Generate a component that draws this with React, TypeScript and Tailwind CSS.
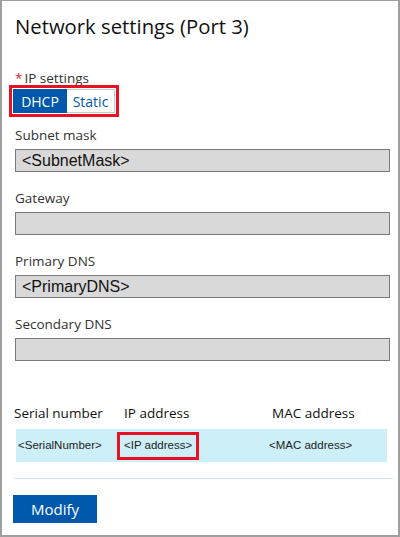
import React from "react";

const ui = { fontFamily: '"Open Sans", "Noto Sans", sans-serif' };
const arial = { fontFamily: '"Liberation Sans", Arial, sans-serif' };

function Field({ label, value }: { label: string; value?: string }) {
  return (
    <div className="flex flex-col">
      <div className="text-[13.5px] leading-[20px] text-[#333]" style={ui}>
        {label}
      </div>
      <div
        className="mt-[4px] h-[23px] w-[375px] bg-[#d9d9d9] border border-[#7a7a7a] flex items-center pl-[6px] text-[16px] text-[#111]"
        style={arial}
      >
        {value}
      </div>
    </div>
  );
}

export default function App() {
  return (
    <div className="w-[400px] h-[537px] bg-white border-[#a0a0a0] border-t border-l-2 border-r-2 border-b-2 flex flex-col">
      <div className="pl-[13px] pt-[10px] text-[20.3px] leading-[30px] text-[#111]" style={ui}>
        Network settings (Port 3)
      </div>
      <div className="pl-[13px] pt-[28px] flex flex-col">
        <div className="text-[13.5px] leading-[18px] text-[#333]" style={ui}>
          <span className="text-[#e0202a] mr-[2px]">*</span>IP settings
        </div>
        <div className="-ml-[6px] mt-[-2px] inline-flex self-start border-[3px] border-[#e81123] p-[1px]">
          <div className="flex h-[24px]">
            <div className="bg-[#0058ad] text-white text-[14px] w-[54px] flex items-center justify-center" style={ui}>
              DHCP
            </div>
            <div className="border border-[#c8c8c8] border-l-0 text-[#0058ad] text-[14px] w-[48px] flex items-center justify-center bg-white" style={ui}>
              Static
            </div>
          </div>
        </div>
        <div className="mt-[8px] flex flex-col gap-[16px]">
          <Field label="Subnet mask" value="<SubnetMask>" />
          <Field label="Gateway" />
          <Field label="Primary DNS" value="<PrimaryDNS>" />
          <Field label="Secondary DNS" />
        </div>
      </div>
      <div className="mt-[42px] pl-[12px] flex text-[13.5px] leading-[20px] text-[#111]" style={ui}>
        <div className="w-[110px]">Serial number</div>
        <div className="w-[148px]">IP address</div>
        <div>MAC address</div>
      </div>
      <div className="mt-[6px] ml-[14px] w-[371px] h-[33px] bg-[#cdeff8] flex items-center text-[11.5px] text-[#222]" style={arial}>
        <div className="w-[101px] pl-[2px]">&lt;SerialNumber&gt;</div>
        <div className="w-[152px] flex">
          <div className="border-[3px] border-[#e81123] h-[28px] w-[82px] flex items-center pl-[4px]">
            &lt;IP address&gt;
          </div>
        </div>
        <div>&lt;MAC address&gt;</div>
      </div>
      <div className="mt-[16px] ml-[12px] mr-[5px] h-px bg-[#cfe6ee]" />
      <div className="pl-[11px] pt-[16px]">
        <button
          className="w-[84px] h-[28px] bg-[#0058ad] text-white text-[15px] flex items-center justify-center"
          style={ui}
        >
          Modify
        </button>
      </div>
    </div>
  );
}
